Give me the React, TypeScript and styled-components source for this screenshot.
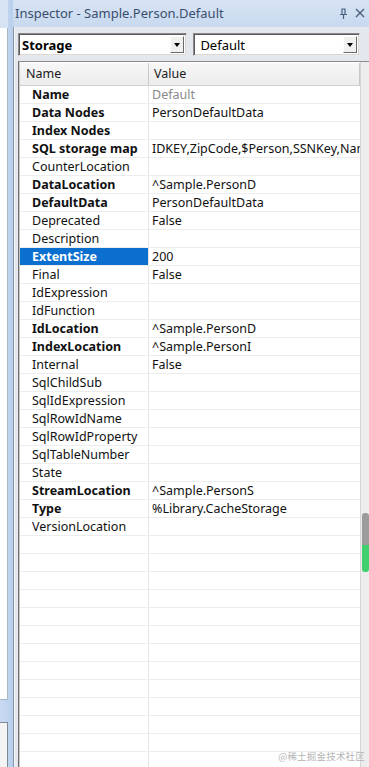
import styled, { createGlobalStyle } from "styled-components";

const GlobalStyle = createGlobalStyle`
  html, body {
    margin: 0;
    padding: 0;
    overflow: hidden;
    background: #c7d9f0;
  }
  * { box-sizing: border-box; }
`;

const FONT = `"Noto Sans", "Open Sans", "Liberation Sans", sans-serif`;

type Prop = { name: string; value?: string; bold?: boolean; muted?: boolean; selected?: boolean };

const PROPS: Prop[] = [
  { name: "Name", value: "Default", bold: true, muted: true },
  { name: "Data Nodes", value: "PersonDefaultData", bold: true },
  { name: "Index Nodes", bold: true },
  { name: "SQL storage map", value: "IDKEY,ZipCode,$Person,SSNKey,NameIDX", bold: true },
  { name: "CounterLocation" },
  { name: "DataLocation", value: "^Sample.PersonD", bold: true },
  { name: "DefaultData", value: "PersonDefaultData", bold: true },
  { name: "Deprecated", value: "False" },
  { name: "Description" },
  { name: "ExtentSize", value: "200", bold: true, selected: true },
  { name: "Final", value: "False" },
  { name: "IdExpression" },
  { name: "IdFunction" },
  { name: "IdLocation", value: "^Sample.PersonD", bold: true },
  { name: "IndexLocation", value: "^Sample.PersonI", bold: true },
  { name: "Internal", value: "False" },
  { name: "SqlChildSub" },
  { name: "SqlIdExpression" },
  { name: "SqlRowIdName" },
  { name: "SqlRowIdProperty" },
  { name: "SqlTableNumber" },
  { name: "State" },
  { name: "StreamLocation", value: "^Sample.PersonS", bold: true },
  { name: "Type", value: "%Library.CacheStorage", bold: true },
  { name: "VersionLocation" },
];

const Screen = styled.div`
  display: flex;
  width: 369px;
  height: 767px;
  font-family: ${FONT};
  position: relative;
`;

/* strip of the neighbouring docked window on the left */
const SideStrip = styled.div`
  width: 13px;
  display: flex;
  flex-direction: column;
  padding-right: 5px;
  background: linear-gradient(to right, #c9dbf2, #b9cfec);
`;

const SideTop = styled.div`
  height: 28px;
  background: #d6e3f3;
`;

const SideList = styled.div`
  flex: 1;
  background: #fff;
  border-right: 1px solid #a9b6c6;
  border-bottom: 1px solid #a9b6c6;
`;

const SideGap = styled.div`
  height: 22px;
`;

const SideBottom = styled.div`
  height: 45px;
  background: #f4f4f4;
  border-top: 1px solid #7f8a99;
  border-right: 1px solid #7f8a99;
`;

const Panel = styled.div`
  flex: 1;
  display: flex;
  flex-direction: column;
  min-width: 0;
`;

const TitleBar = styled.div`
  height: 27px;
  display: flex;
  align-items: center;
  padding: 0 4px 1px 2px;
  background: linear-gradient(#d7e4f4, #c8d9ef);
  color: #3a4e6e;
  font-size: 13px;
`;

const Title = styled.span`
  flex: 1;
  white-space: nowrap;
`;

const TitleIcons = styled.div`
  display: flex;
  gap: 7px;
  align-items: center;
`;

const Body = styled.div`
  flex: 1;
  display: flex;
  flex-direction: column;
  gap: 5px;
  padding: 6px 0 0 4px;
  background: #e4e8ee;
  border-left: 1px solid #8794a6;
  box-shadow: inset 1px 0 0 #f5f7fa;
  min-height: 0;
`;

const ComboRow = styled.div`
  display: flex;
  gap: 6px;
  padding-right: 9px;
`;

const Combo = styled.div<{ $width: number; $bold?: boolean }>`
  width: ${(p) => p.$width}px;
  height: 23px;
  display: flex;
  align-items: center;
  background: #fff;
  border: 1px solid;
  border-color: #8a8a8a #e8e8e8 #e8e8e8 #8a8a8a;
  box-shadow: inset 1px 1px 0 #5a5a5a, inset -1px -1px 0 #d8d8d8;
  padding: 0 2px 0 3px;
  font-size: 13px;
  font-weight: ${(p) => (p.$bold ? 700 : 400)};
  color: #000;
  & > span {
    flex: 1;
    white-space: nowrap;
  }
`;

const ComboButton = styled.div`
  width: 14px;
  height: 17px;
  display: flex;
  align-items: center;
  justify-content: center;
  background: #f0f0f0;
  border: 1px solid;
  border-color: #fdfdfd #6a6a6a #6a6a6a #fdfdfd;
  &::after {
    content: "";
    border-left: 3.5px solid transparent;
    border-right: 3.5px solid transparent;
    border-top: 4px solid #000;
    margin-top: 1px;
  }
`;

const Grid = styled.div`
  flex: 1;
  display: flex;
  min-height: 0;
  background: #fff;
  border-top: 1px solid #8a8a8a;
  border-left: 1px solid #6e6e6e;
  box-shadow: inset 1px 1px 0 #c8c8c8;
`;

const Table = styled.div`
  flex: 1;
  display: flex;
  flex-direction: column;
  min-width: 0;
  overflow: hidden;
  padding-left: 1px;
  border-right: 1px solid #d6d6d6;
`;

const HeaderRow = styled.div`
  height: 24px;
  display: flex;
  flex-shrink: 0;
  background: linear-gradient(#f7f7f7, #ececec);
  border-top: 1px solid #fff;
  border-bottom: 1px solid #d0d0d0;
  font-size: 12.5px;
  color: #1a1a1a;
`;

const HeaderCell = styled.div<{ $width?: number }>`
  ${(p) => (p.$width ? `width: ${p.$width}px;` : "flex: 1;")}
  display: flex;
  align-items: center;
  padding-left: ${(p) => (p.$width ? 6 : 5)}px;
  padding-bottom: 2px;
  border-right: 1px solid #c9c9c9;
  white-space: nowrap;
`;

const Row = styled.div`
  height: 18px;
  display: flex;
  flex-shrink: 0;
  border-bottom: 1px solid #ededed;
  font-size: 12.5px;
`;

const NameCell = styled.div<{ $bold?: boolean; $selected?: boolean }>`
  width: 129px;
  display: flex;
  align-items: center;
  padding-left: 12px;
  white-space: nowrap;
  overflow: hidden;
  border-right: 1px solid #e4e4e4;
  font-weight: ${(p) => (p.$bold ? 700 : 400)};
  color: ${(p) => (p.$selected ? "#fff" : "#111")};
  background: ${(p) => (p.$selected ? "#0b6fd0" : "transparent")};
`;

const ValueCell = styled.div<{ $muted?: boolean }>`
  flex: 1;
  display: flex;
  align-items: center;
  padding-left: 3px;
  white-space: nowrap;
  overflow: hidden;
  color: ${(p) => (p.$muted ? "#8a8a8a" : "#111")};
`;

const ScrollTrack = styled.div<{ $offset: number }>`
  width: 8px;
  flex-shrink: 0;
  background: #ededed;
  padding-top: ${(p) => p.$offset}px;
  padding-left: 1px;
`;

const ThumbPart = styled.div<{ $h: number; $color: string; $round: "top" | "bottom" }>`
  height: ${(p) => p.$h}px;
  background: ${(p) => p.$color};
  border-radius: ${(p) => (p.$round === "top" ? "3px 3px 0 0" : "0 0 3px 3px")};
`;

const Watermark = styled.div`
  position: absolute;
  right: 4px;
  bottom: 4px;
  font-family: "Noto Sans CJK SC", sans-serif;
  font-size: 9.5px;
  color: #b4b4b4;
  letter-spacing: 0.2px;
`;

function PinIcon() {
  return (
    <svg width="9" height="11" viewBox="0 0 9 11">
      <path d="M2.5 1h4M3 1v5M6 1v5M1 6.5h7M4.5 7v4" stroke="#4b5f7d" strokeWidth="1.2" fill="none" />
    </svg>
  );
}

function CloseIcon() {
  return (
    <svg width="10" height="10" viewBox="0 0 10 10">
      <path d="M1 1l8 8M9 1l-8 8" stroke="#4b5f7d" strokeWidth="1.4" />
    </svg>
  );
}

export default function App() {
  const emptyRows = Array.from({ length: 14 });
  return (
    <Screen>
      <GlobalStyle />
      <SideStrip>
        <SideTop />
        <SideList />
        <SideGap />
        <SideBottom />
      </SideStrip>
      <Panel>
        <TitleBar>
          <Title>Inspector - Sample.Person.Default</Title>
          <TitleIcons>
            <PinIcon />
            <CloseIcon />
          </TitleIcons>
        </TitleBar>
        <Body>
          <ComboRow>
            <Combo $width={169} $bold>
              <span>Storage</span>
              <ComboButton />
            </Combo>
            <Combo $width={167}>
              <span>&nbsp;Default</span>
              <ComboButton />
            </Combo>
          </ComboRow>
          <Grid>
            <Table>
              <HeaderRow>
                <HeaderCell $width={129}>Name</HeaderCell>
                <HeaderCell>Value</HeaderCell>
              </HeaderRow>
              {PROPS.map((p) => (
                <Row key={p.name}>
                  <NameCell $bold={p.bold} $selected={p.selected}>
                    {p.name}
                  </NameCell>
                  <ValueCell $muted={p.muted}>{p.value ?? ""}</ValueCell>
                </Row>
              ))}
              {emptyRows.map((_, i) => (
                <Row key={"e" + i}>
                  <NameCell />
                  <ValueCell />
                </Row>
              ))}
            </Table>
            <ScrollTrack $offset={451}>
              <ThumbPart $h={32} $color="#9b9b9b" $round="top" />
              <ThumbPart $h={27} $color="#3fcf6c" $round="bottom" />
            </ScrollTrack>
          </Grid>
        </Body>
      </Panel>
      <Watermark>@稀土掘金技术社区</Watermark>
    </Screen>
  );
}
